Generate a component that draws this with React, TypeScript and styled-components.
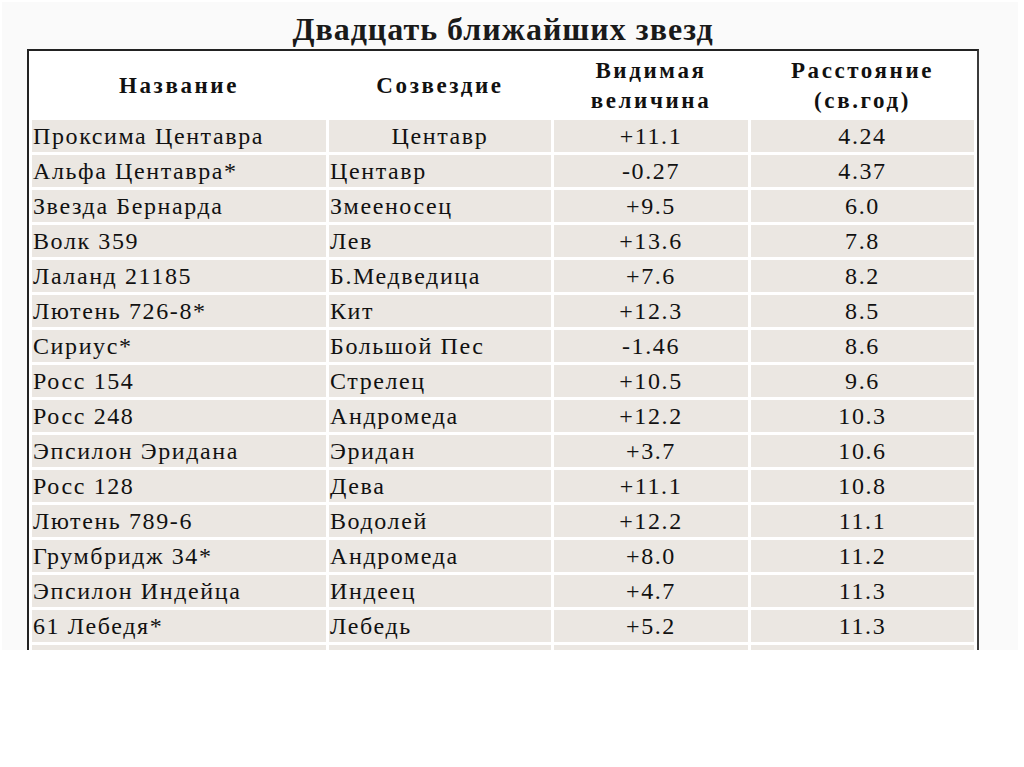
import React from "react";
import styled, { createGlobalStyle } from "styled-components";

const Global = createGlobalStyle`
  html, body { margin: 0; padding: 0; background: #ffffff; }
  body { font-family: "Liberation Serif", "Times New Roman", serif; color: #111; }
`;

const Slide = styled.div`
  margin: 2px 0 0 2px;
  width: 1016px;
  height: 648px;
  background: #fafafa;
  overflow: hidden;
`;

const Content = styled.div`
  width: 952px;
  margin-left: 25px;
  display: flex;
  flex-direction: column;
`;

const Title = styled.h1`
  margin: 0;
  height: 47px;
  padding-top: 10px;
  box-sizing: border-box;
  text-align: center;
  font-size: 32px;
  line-height: 34px;
  font-weight: bold;
  letter-spacing: 1px;
  color: #1a1a1a;
`;

const Table = styled.table`
  width: 952px;
  border: 2px solid #222;
  border-right-color: #3a3a3a;
  border-spacing: 3px;
  background: #ffffff;
  table-layout: fixed;
`;

const Head = styled.th`
  height: 63px;
  padding: 0;
  font-size: 23px;
  line-height: 30px;
  font-weight: bold;
  letter-spacing: 2.6px;
  text-align: center;
  vertical-align: middle;
  color: #111;
`;

const Cell = styled.td<{ $align: "left" | "center" }>`
  height: 32px;
  padding: 0 1px;
  background: #ebe7e2;
  font-size: 24px;
  line-height: 32px;
  letter-spacing: 1.6px;
  text-align: ${(p) => p.$align};
  white-space: nowrap;
  color: #111;
`;

type Row = [string, string, string, string, boolean?];

const rows: Row[] = [
  ["Проксима Центавра", "Центавр", "+11.1", "4.24", true],
  ["Альфа Центавра*", "Центавр", "-0.27", "4.37"],
  ["Звезда Бернарда", "Змееносец", "+9.5", "6.0"],
  ["Волк 359", "Лев", "+13.6", "7.8"],
  ["Лаланд 21185", "Б.Медведица", "+7.6", "8.2"],
  ["Лютень 726-8*", "Кит", "+12.3", "8.5"],
  ["Сириус*", "Большой Пес", "-1.46", "8.6"],
  ["Росс 154", "Стрелец", "+10.5", "9.6"],
  ["Росс 248", "Андромеда", "+12.2", "10.3"],
  ["Эпсилон Эридана", "Эридан", "+3.7", "10.6"],
  ["Росс 128", "Дева", "+11.1", "10.8"],
  ["Лютень 789-6", "Водолей", "+12.2", "11.1"],
  ["Грумбридж 34*", "Андромеда", "+8.0", "11.2"],
  ["Эпсилон Индейца", "Индеец", "+4.7", "11.3"],
  ["61 Лебедя*", "Лебедь", "+5.2", "11.3"],
];

export default function App() {
  return (
    <>
      <Global />
      <Slide>
        <Content>
          <Title>Двадцать ближайших звезд</Title>
          <Table>
            <colgroup>
              <col style={{ width: 294 }} />
              <col style={{ width: 222 }} />
              <col style={{ width: 194 }} />
              <col style={{ width: 223 }} />
            </colgroup>
            <thead>
              <tr>
                <Head>Название</Head>
                <Head>Созвездие</Head>
                <Head>
                  Видимая
                  <br />
                  величина
                </Head>
                <Head>
                  Расстояние
                  <br />
                  (св.год)
                </Head>
              </tr>
            </thead>
            <tbody>
              {rows.map(([name, con, mag, dist, centered]) => (
                <tr key={name}>
                  <Cell $align="left">{name}</Cell>
                  <Cell $align={centered ? "center" : "left"}>{con}</Cell>
                  <Cell $align="center">{mag}</Cell>
                  <Cell $align="center">{dist}</Cell>
                </tr>
              ))}
              <tr>
                <Cell $align="left" />
                <Cell $align="left" />
                <Cell $align="center" />
                <Cell $align="center" />
              </tr>
            </tbody>
          </Table>
        </Content>
      </Slide>
    </>
  );
}
